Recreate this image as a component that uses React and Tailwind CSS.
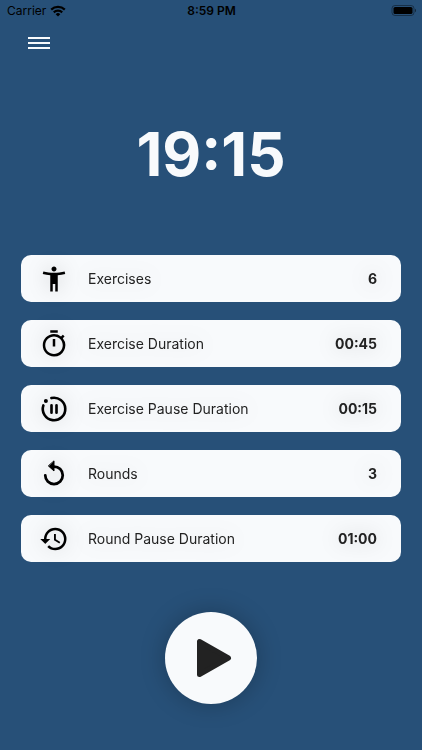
import { useState } from 'react';
import { MdAccessibilityNew, MdOutlineTimer, MdHistory } from 'react-icons/md';

function PauseRingIcon({ className }) {
  return (
    <svg viewBox="0 0 24 24" className={className} fill="none" stroke="currentColor" strokeWidth="2.1" strokeLinecap="round">
      <path d="M9.9 3.25A9 9 0 1 1 3.5 9.1" />
      <path d="M10 9v6M14 9v6" />
      <circle cx="5.5" cy="5.5" r="1.6" fill="currentColor" stroke="none" />
    </svg>
  );
}

function ReplayIcon({ className }) {
  return (
    <svg viewBox="0 0 24 24" className={className} fill="none" stroke="currentColor" strokeLinecap="round" strokeLinejoin="round">
      <path d="M5 13a7 7 0 1 0 7-7" strokeWidth="2.2" />
      <path d="M12 1.8v7.8L7.7 5.7z" strokeWidth="0.8" fill="currentColor" />
    </svg>
  );
}

const settings = [
  { label: 'Exercises', value: '6', Icon: MdAccessibilityNew },
  { label: 'Exercise Duration', value: '00:45', Icon: MdOutlineTimer },
  { label: 'Exercise Pause Duration', value: '00:15', Icon: PauseRingIcon },
  { label: 'Rounds', value: '3', Icon: ReplayIcon },
  { label: 'Round Pause Duration', value: '01:00', Icon: MdHistory },
];

function StatusBar() {
  return (
    <div className="grid h-[22px] grid-cols-3 items-center pr-[6px] pl-[7px] text-[12px] leading-4 text-black">
      <div className="flex items-center gap-1">
        <span>Carrier</span>
        <svg viewBox="0 0 16 12" className="h-3 w-4" fill="none" stroke="currentColor" strokeWidth="2.2">
          <path d="M1.2 4.6a9.8 9.8 0 0 1 13.6 0" />
          <path d="M3.8 7.4a6 6 0 0 1 8.4 0" />
          <path d="M8 11.6 5.7 9.2a3.3 3.3 0 0 1 4.6 0z" fill="currentColor" stroke="none" />
        </svg>
      </div>
      <span className="text-center font-semibold [font-feature-settings:'case']">8:59 PM</span>
      <svg viewBox="0 0 25 12" className="h-3 w-[25px] justify-self-end">
        <rect x="1" y="0.5" width="22" height="10" rx="3" fill="none" stroke="#000" strokeOpacity="0.4" />
        <rect x="2.5" y="2" width="19" height="7" rx="1.6" fill="#000" />
        <path d="M24 3.8v3.4a1.9 1.9 0 0 0 0-3.4z" fill="#000" fillOpacity="0.5" />
      </svg>
    </div>
  );
}

function SettingRow({ label, value, Icon }) {
  return (
    <button
      type="button"
      className="flex h-[47px] w-full items-center rounded-[10px] bg-[#f8fafc] pr-6 pl-[18px] text-[14px] leading-5 text-[#222222]"
    >
      <Icon className="size-[30px] shrink-0 text-black drop-shadow-[0_0_10px_rgba(0,0,0,0.2)]" />
      <span className="ml-[19px] flex-1 text-left drop-shadow-[0_0_10px_rgba(0,0,0,0.1)]">{label}</span>
      <span className="font-bold drop-shadow-[0_0_10px_rgba(0,0,0,0.2)] [font-feature-settings:'case']">{value}</span>
    </button>
  );
}

export default function App() {
  const [running, setRunning] = useState(false);

  return (
    <div className="flex min-h-screen flex-col bg-[#275078] font-['Inter',sans-serif]">
      <StatusBar />

      <header className="px-7 pt-[15px]">
        <button type="button" aria-label="Menu" className="flex w-[22px] flex-col gap-[3px]">
          <span className="h-0.5 w-full bg-[#f8fafc]" />
          <span className="h-0.5 w-full bg-[#f8fafc]" />
          <span className="h-0.5 w-full bg-[#f8fafc]" />
        </button>
      </header>

      <main className="flex flex-1 flex-col items-center px-[21px]">
        <h1 className="mt-[75px] text-[60px] leading-[60px] font-bold text-[#f8fafc] [font-feature-settings:'case']">19:15</h1>

        <div className="mt-[71px] flex w-full flex-col gap-[18px]">
          {settings.map((item) => (
            <SettingRow key={item.label} {...item} />
          ))}
        </div>

        <button
          type="button"
          aria-label={running ? 'Pause' : 'Start'}
          onClick={() => setRunning(!running)}
          className="mt-[50px] flex size-[92px] items-center justify-center rounded-full bg-[#f8fafc] text-[#222222] shadow-[0_0_24px_rgba(0,0,0,0.25)]"
        >
          <svg viewBox="0 0 92 92" className="size-full" fill="currentColor" stroke="currentColor">
            {running ? (
              <path d="M34 30v32M58 30v32" strokeWidth="10" strokeLinecap="round" />
            ) : (
              <path d="M34.5 29.5v33L63.5 46z" strokeWidth="5" strokeLinejoin="round" />
            )}
          </svg>
        </button>
      </main>
    </div>
  );
}
